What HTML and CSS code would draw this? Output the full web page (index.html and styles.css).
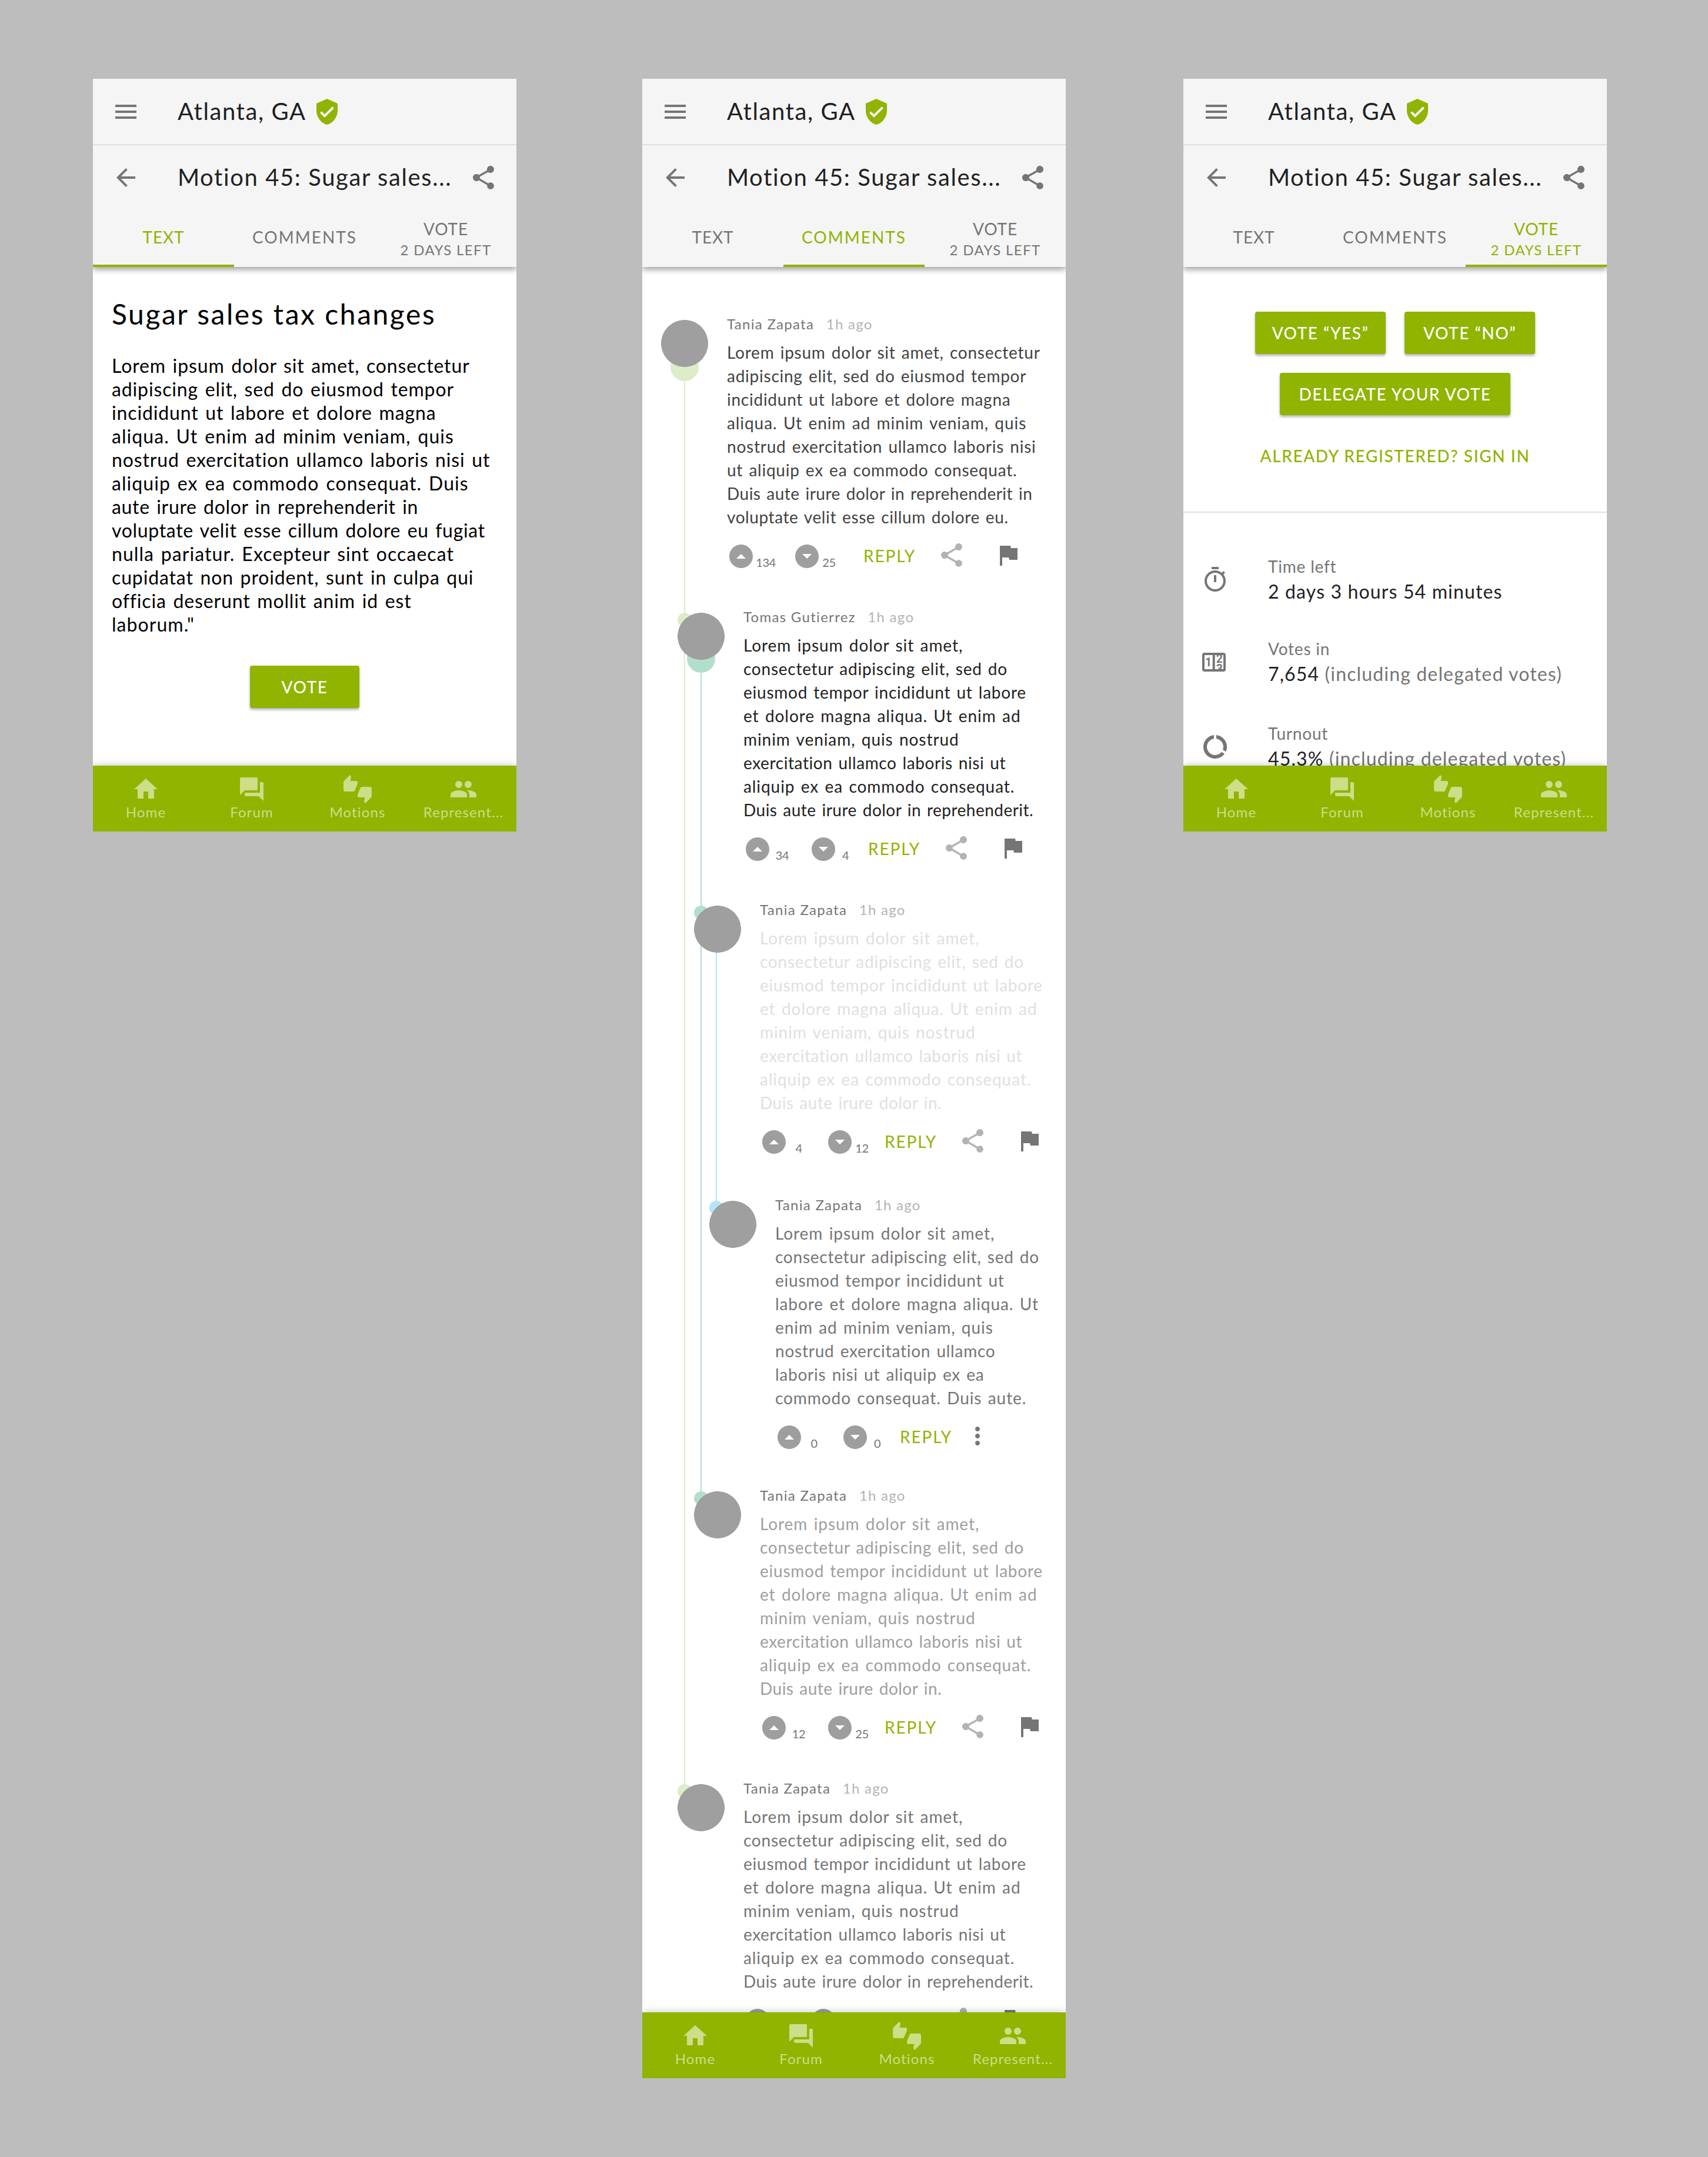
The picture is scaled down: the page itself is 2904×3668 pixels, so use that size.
FILE: index.html
```html
<!DOCTYPE html>
<html lang="en">
<head>
<meta charset="utf-8">
<title>Motion 45: Sugar sales tax changes</title>
<link rel="stylesheet" href="styles.css">
</head>
<body>
<svg class="sprite" aria-hidden="true">
  <symbol id="i-menu" viewBox="0 0 24 24"><path d="M3 18h18v-2H3v2zm0-5h18v-2H3v2zm0-7v2h18V6H3z"/></symbol>
  <symbol id="i-back" viewBox="0 0 24 24"><path d="M20 11H7.83l5.59-5.59L12 4l-8 8 8 8 1.41-1.41L7.83 13H20v-2z"/></symbol>
  <symbol id="i-share" viewBox="0 0 24 24"><path d="M18 16.08c-.76 0-1.44.3-1.96.77L8.91 12.7c.05-.23.09-.46.09-.7s-.04-.47-.09-.7l7.05-4.11c.54.5 1.25.81 2.04.81 1.66 0 3-1.34 3-3s-1.34-3-3-3-3 1.34-3 3c0 .24.04.47.09.7L8.04 9.81C7.5 9.31 6.79 9 6 9c-1.66 0-3 1.34-3 3s1.34 3 3 3c.79 0 1.5-.31 2.04-.81l7.12 4.16c-.05.21-.08.43-.08.65 0 1.61 1.31 2.92 2.92 2.92 1.61 0 2.92-1.31 2.92-2.92s-1.31-2.92-2.92-2.92z"/></symbol>
  <symbol id="i-shield" viewBox="0 0 24 24"><path d="M12 1L3 5v6c0 5.55 3.84 10.74 9 12 5.16-1.26 9-6.45 9-12V5l-9-4zm-2 16l-4-4 1.41-1.41L10 14.17l6.59-6.59L18 9l-8 8z"/></symbol>
  <symbol id="i-home" viewBox="0 0 24 24"><path d="M10 20v-6h4v6h5v-8h3L12 3 2 12h3v8z"/></symbol>
  <symbol id="i-forum" viewBox="0 0 24 24"><path d="M21 6h-2v9H6v2c0 .55.45 1 1 1h11l4 4V7c0-.55-.45-1-1-1zm-4 6V3c0-.55-.45-1-1-1H3c-.55 0-1 .45-1 1v14l4-4h10c.55 0 1-.45 1-1z"/></symbol>
  <symbol id="i-thumbs" viewBox="0 0 24 24"><path d="M12 6c0-.55-.45-1-1-1H5.82l.66-3.18.02-.23c0-.31-.13-.59-.33-.8L5.38 0 .44 4.94C.17 5.21 0 5.59 0 6v6.5c0 .83.67 1.5 1.5 1.5h6.75c.62 0 1.15-.38 1.38-.91l2.26-5.29c.07-.17.11-.36.11-.55V6zm10.5 4h-6.75c-.62 0-1.15.38-1.38.91l-2.26 5.29c-.07.17-.11.36-.11.55V18c0 .55.45 1 1 1h5.18l-.66 3.18-.02.24c0 .31.13.59.33.8l.79.78 4.94-4.94c.27-.27.44-.65.44-1.06v-6.5c0-.83-.67-1.5-1.5-1.5z"/></symbol>
  <symbol id="i-people" viewBox="0 0 24 24"><path d="M16 11c1.66 0 2.99-1.34 2.99-3S17.66 5 16 5c-1.66 0-3 1.34-3 3s1.34 3 3 3zm-8 0c1.66 0 2.99-1.34 2.99-3S9.66 5 8 5C6.34 5 5 6.34 5 8s1.34 3 3 3zm0 2c-2.33 0-7 1.17-7 3.5V19h14v-2.5c0-2.33-4.67-3.5-7-3.5zm8 0c-.29 0-.62.02-.97.05 1.16.84 1.97 1.97 1.97 3.45V19h6v-2.5c0-2.33-4.67-3.5-7-3.5z"/></symbol>
  <symbol id="i-up" viewBox="0 0 24 24"><path d="M12 22c5.52 0 10-4.48 10-10S17.52 2 12 2 2 6.48 2 12s4.48 10 10 10zm0-12l4 4H8l4-4z"/></symbol>
  <symbol id="i-down" viewBox="0 0 24 24"><path d="M12 2C6.48 2 2 6.48 2 12s4.48 10 10 10 10-4.48 10-10S17.52 2 12 2zm0 12l-4-4h8l-4 4z"/></symbol>
  <symbol id="i-flag" viewBox="0 0 24 24"><path d="M14.4 6L14 4H5v17h2v-7h5.6l.4 2h7V6z"/></symbol>
  <symbol id="i-more" viewBox="0 0 24 24"><path d="M12 8c1.1 0 2-.9 2-2s-.9-2-2-2-2 .9-2 2 .9 2 2 2zm0 2c-1.1 0-2 .9-2 2s.9 2 2 2 2-.9 2-2-.9-2-2-2zm0 6c-1.1 0-2 .9-2 2s.9 2 2 2 2-.9 2-2-.9-2-2-2z"/></symbol>
  <symbol id="i-timer" viewBox="0 0 24 24"><path d="M15 1H9v2h6V1zm-4 13h2V8h-2v6zm8.03-6.61l1.42-1.42c-.43-.51-.9-.99-1.41-1.41l-1.42 1.42C16.07 4.74 14.12 4 12 4c-4.97 0-9 4.03-9 9s4.02 9 9 9 9-4.03 9-9c0-2.12-.74-4.07-1.97-5.61zM12 20c-3.87 0-7-3.13-7-7s3.13-7 7-7 7 3.13 7 7-3.13 7-7 7z"/></symbol>
  <symbol id="i-usage" viewBox="0 0 24 24"><path d="M13 2.05v3.03c3.39.49 6 3.39 6 6.92 0 .9-.18 1.75-.48 2.54l2.6 1.53c.56-1.24.88-2.62.88-4.07 0-5.18-3.95-9.45-9-9.95zM12 19c-3.87 0-7-3.13-7-7 0-3.53 2.61-6.43 6-6.92V2.05c-5.06.5-9 4.76-9 9.95 0 5.52 4.47 10 9.99 10 3.31 0 6.24-1.61 8.06-4.09l-2.6-1.53C16.17 17.98 14.21 19 12 19z"/></symbol>
</svg>

<main class="board">

  <section class="phone">
    <header class="header">
      <div class="bar bar-place">
        <svg class="icon"><use href="#i-menu"/></svg>
        <h1 class="bar-title">Atlanta, GA</h1>
        <svg class="icon shield"><use href="#i-shield"/></svg>
      </div>
      <div class="bar bar-motion">
        <svg class="icon"><use href="#i-back"/></svg>
        <h2 class="bar-title">Motion 45: Sugar sales...</h2>
        <svg class="icon bar-share"><use href="#i-share"/></svg>
      </div>
      <nav class="tabs">
        <div class="tab tab-text active">TEXT</div>
        <div class="tab tab-comments">COMMENTS</div>
        <div class="tab tab-vote">VOTE<small>2 DAYS LEFT</small></div>
      </nav>
    </header>
    <article class="content motion">
      <h3>Sugar sales tax changes</h3>
      <p>Lorem ipsum dolor sit amet, consectetur<br>adipiscing elit, sed do eiusmod tempor<br>incididunt ut labore et dolore magna<br><span class="loose">aliqua. Ut enim ad minim veniam, quis</span><br>nostrud exercitation ullamco laboris nisi ut<br><span class="loose">aliquip ex ea commodo consequat. Duis</span><br><span class="snug">aute irure dolor in reprehenderit in</span><br><span class="snug">voluptate velit esse cillum dolore eu fugiat</span><br><span class="loose">nulla pariatur. Excepteur sint occaecat</span><br>cupidatat non proident, sunt in culpa qui<br>officia deserunt mollit anim id est<br><span class="loose">laborum."</span></p>
      <button class="button button-small">VOTE</button>
    </article>
    <nav class="bottom-nav">
      <div class="nav-item"><svg class="icon"><use href="#i-home"/></svg><span>Home</span></div>
      <div class="nav-item"><svg class="icon"><use href="#i-forum"/></svg><span>Forum</span></div>
      <div class="nav-item"><svg class="icon"><use href="#i-thumbs"/></svg><span>Motions</span></div>
      <div class="nav-item"><svg class="icon"><use href="#i-people"/></svg><span>Represent...</span></div>
    </nav>
  </section>

  <section class="phone phone-tall">
    <header class="header">
      <div class="bar bar-place">
        <svg class="icon"><use href="#i-menu"/></svg>
        <h1 class="bar-title">Atlanta, GA</h1>
        <svg class="icon shield"><use href="#i-shield"/></svg>
      </div>
      <div class="bar bar-motion">
        <svg class="icon"><use href="#i-back"/></svg>
        <h2 class="bar-title">Motion 45: Sugar sales...</h2>
        <svg class="icon bar-share"><use href="#i-share"/></svg>
      </div>
      <nav class="tabs">
        <div class="tab tab-text">TEXT</div>
        <div class="tab tab-comments active">COMMENTS</div>
        <div class="tab tab-vote">VOTE<small>2 DAYS LEFT</small></div>
      </nav>
    </header>
    <div class="content comments">
      <div class="thread thread-lime">
        <div class="rail"></div>
        <article class="comment">
          <div class="avatar has-replies"></div>
          <div class="comment-main">
            <div class="byline">Tania Zapata <time>1h ago</time></div>
            <p class="dark">Lorem ipsum dolor sit amet, consectetur<br>adipiscing elit, sed do eiusmod tempor<br>incididunt ut labore et dolore magna<br><span class="loose">aliqua. Ut enim ad minim veniam, quis</span><br>nostrud exercitation ullamco laboris nisi<br>ut aliquip ex ea commodo consequat.<br><span class="tight">Duis aute irure dolor in reprehenderit in</span><br><span class="snug">voluptate velit esse cillum dolore eu.</span></p>
            <div class="actions actions-wide">
              <svg class="icon vote-icon"><use href="#i-up"/></svg><span class="count">134</span>
              <svg class="icon vote-icon"><use href="#i-down"/></svg><span class="count">25</span>
              <a class="reply">REPLY</a>
              <svg class="icon share-icon"><use href="#i-share"/></svg>
              <svg class="icon flag-icon"><use href="#i-flag"/></svg>
            </div>
          </div>
        </article>

        <div class="replies">
          <div class="thread thread-teal">
            <div class="rail"></div>
            <article class="comment">
              <div class="avatar is-reply has-replies"></div>
              <div class="comment-main">
                <div class="byline">Tomas Gutierrez <time>1h ago</time></div>
                <p class="black"><span class="loose">Lorem ipsum dolor sit amet,</span><br>consectetur adipiscing elit, sed do<br>eiusmod tempor incididunt ut labore<br><span class="loose">et dolore magna aliqua. Ut enim ad</span><br><span class="loose">minim veniam, quis nostrud</span><br><span class="snug">exercitation ullamco laboris nisi ut</span><br><span class="loose">aliquip ex ea commodo consequat.</span><br><span class="tight">Duis aute irure dolor in reprehenderit.</span></p>
                <div class="actions">
                  <svg class="icon vote-icon"><use href="#i-up"/></svg><span class="count">34</span>
                  <svg class="icon vote-icon"><use href="#i-down"/></svg><span class="count">4</span>
                  <a class="reply">REPLY</a>
                  <svg class="icon share-icon"><use href="#i-share"/></svg>
                  <svg class="icon flag-icon"><use href="#i-flag"/></svg>
                </div>
              </div>
            </article>

            <div class="replies">
              <div class="thread thread-blue">
                <div class="rail"></div>
                <article class="comment">
                  <div class="avatar is-reply"></div>
                  <div class="comment-main">
                    <div class="byline">Tania Zapata <time>1h ago</time></div>
                    <p class="faint"><span class="loose">Lorem ipsum dolor sit amet,</span><br>consectetur adipiscing elit, sed do<br>eiusmod tempor incididunt ut labore<br><span class="loose">et dolore magna aliqua. Ut enim ad</span><br><span class="loose">minim veniam, quis nostrud</span><br><span class="snug">exercitation ullamco laboris nisi ut</span><br><span class="loose">aliquip ex ea commodo consequat.</span><br><span class="tight">Duis aute irure dolor in.</span></p>
                    <div class="actions">
                      <svg class="icon vote-icon"><use href="#i-up"/></svg><span class="count">4</span>
                      <svg class="icon vote-icon"><use href="#i-down"/></svg><span class="count">12</span>
                      <a class="reply">REPLY</a>
                      <svg class="icon share-icon"><use href="#i-share"/></svg>
                      <svg class="icon flag-icon"><use href="#i-flag"/></svg>
                    </div>
                  </div>
                </article>
                <div class="replies">
                  <article class="comment">
                    <div class="avatar is-reply"></div>
                    <div class="comment-main">
                      <div class="byline">Tania Zapata <time>1h ago</time></div>
                      <p class="grey"><span class="loose">Lorem ipsum dolor sit amet,</span><br>consectetur adipiscing elit, sed do<br>eiusmod tempor incididunt ut<br><span class="loose">labore et dolore magna aliqua. Ut</span><br><span class="loose">enim ad minim veniam, quis</span><br>nostrud exercitation ullamco<br>laboris nisi ut aliquip ex ea<br><span class="loose">commodo consequat. Duis aute.</span></p>
                      <div class="actions">
                        <svg class="icon vote-icon"><use href="#i-up"/></svg><span class="count">0</span>
                        <svg class="icon vote-icon"><use href="#i-down"/></svg><span class="count">0</span>
                        <a class="reply">REPLY</a>
                        <svg class="icon more-icon"><use href="#i-more"/></svg>
                      </div>
                    </div>
                  </article>
                </div>
              </div>
              <article class="comment">
                <div class="avatar is-reply"></div>
                <div class="comment-main">
                  <div class="byline">Tania Zapata <time>1h ago</time></div>
                  <p class="pale"><span class="loose">Lorem ipsum dolor sit amet,</span><br>consectetur adipiscing elit, sed do<br>eiusmod tempor incididunt ut labore<br><span class="loose">et dolore magna aliqua. Ut enim ad</span><br><span class="loose">minim veniam, quis nostrud</span><br><span class="snug">exercitation ullamco laboris nisi ut</span><br><span class="loose">aliquip ex ea commodo consequat.</span><br><span class="tight">Duis aute irure dolor in.</span></p>
                  <div class="actions">
                    <svg class="icon vote-icon"><use href="#i-up"/></svg><span class="count">12</span>
                    <svg class="icon vote-icon"><use href="#i-down"/></svg><span class="count">25</span>
                    <a class="reply">REPLY</a>
                    <svg class="icon share-icon"><use href="#i-share"/></svg>
                    <svg class="icon flag-icon"><use href="#i-flag"/></svg>
                  </div>
                </div>
              </article>
            </div>
          </div>
          <article class="comment">
            <div class="avatar is-reply"></div>
            <div class="comment-main">
              <div class="byline">Tania Zapata <time>1h ago</time></div>
              <p class="grey"><span class="loose">Lorem ipsum dolor sit amet,</span><br>consectetur adipiscing elit, sed do<br>eiusmod tempor incididunt ut labore<br><span class="loose">et dolore magna aliqua. Ut enim ad</span><br><span class="loose">minim veniam, quis nostrud</span><br><span class="snug">exercitation ullamco laboris nisi ut</span><br><span class="loose">aliquip ex ea commodo consequat.</span><br><span class="tight">Duis aute irure dolor in reprehenderit.</span></p>
              <div class="actions">
                <svg class="icon vote-icon"><use href="#i-up"/></svg><span class="count"></span>
                <svg class="icon vote-icon"><use href="#i-down"/></svg><span class="count"></span>
                <span class="reply"></span>
                <svg class="icon share-icon"><use href="#i-share"/></svg>
                <svg class="icon flag-icon"><use href="#i-flag"/></svg>
              </div>
            </div>
          </article>
        </div>
      </div>
    </div>
    <nav class="bottom-nav">
      <div class="nav-item"><svg class="icon"><use href="#i-home"/></svg><span>Home</span></div>
      <div class="nav-item"><svg class="icon"><use href="#i-forum"/></svg><span>Forum</span></div>
      <div class="nav-item"><svg class="icon"><use href="#i-thumbs"/></svg><span>Motions</span></div>
      <div class="nav-item"><svg class="icon"><use href="#i-people"/></svg><span>Represent...</span></div>
    </nav>
  </section>

  <section class="phone">
    <header class="header">
      <div class="bar bar-place">
        <svg class="icon"><use href="#i-menu"/></svg>
        <h1 class="bar-title">Atlanta, GA</h1>
        <svg class="icon shield"><use href="#i-shield"/></svg>
      </div>
      <div class="bar bar-motion">
        <svg class="icon"><use href="#i-back"/></svg>
        <h2 class="bar-title">Motion 45: Sugar sales...</h2>
        <svg class="icon bar-share"><use href="#i-share"/></svg>
      </div>
      <nav class="tabs">
        <div class="tab tab-text">TEXT</div>
        <div class="tab tab-comments">COMMENTS</div>
        <div class="tab tab-vote active">VOTE<small>2 DAYS LEFT</small></div>
      </nav>
    </header>
    <div class="content voting">
      <div class="ballot">
        <div class="choices">
          <button class="button">VOTE “YES”</button>
          <button class="button">VOTE “NO”</button>
        </div>
        <button class="button button-wide">DELEGATE YOUR VOTE</button>
        <a class="sign-in">ALREADY REGISTERED? SIGN IN</a>
      </div>
      <dl class="stats">
        <div class="stat">
          <svg class="icon"><use href="#i-timer"/></svg>
          <div><dt>Time left</dt><dd>2 days 3 hours 54 minutes</dd></div>
        </div>
        <div class="stat">
          <svg class="icon" viewBox="0 0 48 48">
            <clipPath id="reel"><rect x="24" y="12" width="14" height="24"/></clipPath>
            <rect class="counter-frame" x="4" y="10" width="36" height="28" rx="2"/>
            <path class="counter-frame" d="M21.7 10v28"/>
            <text class="counter-digit" x="12.5" y="31.2">1</text>
            <g clip-path="url(#reel)">
              <text class="counter-digit" x="31.4" y="24.7">2</text>
              <text class="counter-digit" x="31.4" y="42.4">3</text>
            </g>
          </svg>
          <div><dt>Votes in</dt><dd>7,654 <span>(including delegated votes)</span></dd></div>
        </div>
        <div class="stat">
          <svg class="icon"><use href="#i-usage"/></svg>
          <div><dt>Turnout</dt><dd>45.3% <span>(including delegated votes)</span></dd></div>
        </div>
      </dl>
    </div>
    <nav class="bottom-nav">
      <div class="nav-item"><svg class="icon"><use href="#i-home"/></svg><span>Home</span></div>
      <div class="nav-item"><svg class="icon"><use href="#i-forum"/></svg><span>Forum</span></div>
      <div class="nav-item"><svg class="icon"><use href="#i-thumbs"/></svg><span>Motions</span></div>
      <div class="nav-item"><svg class="icon"><use href="#i-people"/></svg><span>Represent...</span></div>
    </nav>
  </section>

</main>
</body>
</html>
```
FILE: styles.css
```css
* { box-sizing: border-box; }

:root {
  --green: #90b400;
  --grey: #757575;
}

body {
  margin: 0;
  background: #bdbdbd;
  font-family: Lato, "Open Sans", sans-serif;
  color: #212121;
}

h1, h2, h3, p, dl, dd { margin: 0; font-weight: 400; }

.sprite { position: absolute; width: 0; height: 0; }

.icon {
  display: block;
  flex: none;
  width: 48px;
  height: 48px;
  fill: var(--grey);
}

.board {
  display: flex;
  align-items: flex-start;
  height: 3668px;
  padding: 134px 0 0 158px;
}

.phone {
  display: flex;
  flex-direction: column;
  flex: none;
  width: 720px;
  height: 1280px;
  overflow: hidden;
  background: #fff;
  white-space: nowrap;
}

.phone-tall { height: 3400px; margin: 0 200px 0 214px; }

/* header */

.header {
  position: relative;
  z-index: 1;
  flex: none;
  background: #f5f5f5;
  box-shadow: 0 4px 10px rgba(0, 0, 0, .4);
}

.bar {
  display: flex;
  align-items: center;
  padding: 0 32px;
}

.bar-place { height: 113px; padding-top: 1px; border-bottom: 2px solid #e0e0e0; }
.bar-motion { height: 111px; padding-bottom: 1px; }

.bar-title {
  margin: -3px 0 0 64px;
  font-size: 40px;
  line-height: 48px;
  letter-spacing: 1.6px;
}

.shield { margin-left: 11px; fill: var(--green); }
.bar-share { margin-left: auto; }

.tabs { display: flex; height: 96px; }

.tab {
  display: flex;
  flex: 1;
  flex-direction: column;
  align-items: center;
  justify-content: center;
  padding-bottom: 2px;
  border-bottom: 4px solid transparent;
  font-size: 28px;
  line-height: 36px;
  letter-spacing: .9px;
  color: var(--grey);
}

.tab-comments { letter-spacing: 2px; }
.tab-vote { padding-top: 8px; }
.tab small { font-size: 24px; letter-spacing: 1.35px; }
.tab.active { color: var(--green); border-color: var(--green); }

.content { flex: 1; min-height: 0; overflow: hidden; }

/* motion text */

.motion { padding: 50px 32px 0; color: #000; }

.motion h3 {
  font-size: 48px;
  line-height: 60px;
  letter-spacing: 2.55px;
}

.motion p {
  margin-top: 38px;
  font-size: 32px;
  line-height: 40px;
  letter-spacing: .027em;
  word-spacing: .082em;
}

/* line tracking */
.loose { letter-spacing: .033em; }
.snug { letter-spacing: .021em; }
.tight { letter-spacing: .017em; }

.button {
  display: block;
  width: 222px;
  height: 72px;
  padding: 0;
  border: 0;
  border-radius: 4px;
  background: var(--green);
  box-shadow: 0 3px 4px rgba(0, 0, 0, .3);
  font: 500 28px/36px Lato, sans-serif;
  letter-spacing: 1.5px;
  color: #fff;
}

.button-small { width: 186px; margin: 50px auto 0; }
.button-wide { width: 392px; }

/* bottom navigation */

.bottom-nav {
  position: relative;
  display: flex;
  flex: none;
  height: 112px;
  padding-top: 16px;
  background: var(--green);
  box-shadow: 0 0 12px rgba(0, 0, 0, .25);
  color: #cddd88;
}

.nav-item {
  display: flex;
  flex: 1;
  flex-direction: column;
  align-items: center;
  font-size: 24px;
  line-height: 28px;
  letter-spacing: 1.1px;
}

.nav-item .icon { margin-bottom: 1px; fill: #cddd88; }

/* comments */

.comments { position: relative; z-index: 0; padding: 90px 0 0 32px; }

.thread { position: relative; }
.thread-lime { --rail: #dcedc8; }
.thread-teal { --rail: #b2dfcb; }
.thread-blue { --rail: #b3e5fc; }

/* runs from the first avatar down to the top of the thread's last reply */
.rail {
  position: absolute;
  top: 80px;
  bottom: 428px;
  left: 39px;
  width: 2px;
  background: var(--rail);
}

.thread-blue > .rail { left: 37px; }

.replies { padding-left: 28px; }
.thread-blue > .replies { padding-left: 26px; }

.comment {
  display: flex;
  gap: 32px;
  height: 428px;
  margin-bottom: 70px;
}

.thread-blue > .comment { margin-bottom: 74px; }
.thread-blue > .replies > .comment { margin-bottom: 66px; }

.avatar {
  position: relative;
  flex: none;
  width: 80px;
  height: 80px;
  background: radial-gradient(circle, #9f9f9f 39.6px, transparent 40.2px);
}

/* branch dots sit behind the disc */
.avatar::before,
.avatar::after { position: absolute; z-index: -1; border-radius: 50%; }

.is-reply::before {
  content: "";
  top: 0;
  left: 0;
  width: 24px;
  height: 24px;
  background: var(--rail);
}

.has-replies::after {
  content: "";
  top: 56px;
  left: 16px;
  width: 48px;
  height: 48px;
  background: var(--rail);
}

.thread-teal > .comment .has-replies::after { top: 54px; }

/* a reply's dot carries the colour of the thread it joins */
.thread-teal > .comment .is-reply::before { background: #dcedc8; }
.thread-blue > .comment .is-reply::before { background: #b2dfcb; }

.comment-main { margin-top: -9px; }

.byline {
  height: 44px;
  font-size: 24px;
  line-height: 32px;
  letter-spacing: 1.3px;
  color: var(--grey);
}

.byline time { margin-left: 13px; color: #b3b3b3; }

.comment p {
  font-size: 28px;
  line-height: 40px;
  letter-spacing: .027em;
  word-spacing: .082em;
}

.dark { color: #424242; }
.black { color: #212121; }
.grey { color: #757575; }
.pale { color: #9e9e9e; }
.faint { color: #e0e0e0; }

.actions {
  display: grid;
  grid-template-columns: 48px 36px 28px 48px 27px 25px 126px 48px 48px 48px;
  grid-template-rows: 52px;
  margin-top: 21px;
}

.actions-wide { grid-template-columns: 48px 36px 28px 48px 27px 45px 126px 48px 48px 48px; }

.actions > :nth-child(3) { grid-column: 4; }
.actions > :nth-child(5) { grid-column: 7; }
.actions > .flag-icon { grid-column: 10; }

.vote-icon { margin-top: 2px; fill: #9e9e9e; }
.share-icon { fill: #b3b3b3; }
.more-icon { margin-left: -18px; }

.count {
  display: flex;
  justify-content: center;
  padding-top: 24px;
  font-size: 20px;
  line-height: 24px;
  letter-spacing: -.4px;
  color: var(--grey);
}

.reply {
  font-size: 28px;
  line-height: 50px;
  letter-spacing: 1.9px;
  color: var(--green);
}

/* voting */

.voting { display: flex; flex-direction: column; }

.ballot {
  display: flex;
  flex: none;
  flex-direction: column;
  align-items: center;
  height: 418px;
  padding-top: 76px;
  border-bottom: 2px solid #e0e0e0;
}

.choices { display: flex; gap: 32px; margin-bottom: 32px; }

.sign-in {
  margin-top: 49px;
  font-size: 28px;
  font-weight: 500;
  line-height: 40px;
  letter-spacing: 1.58px;
  color: var(--green);
}

.stats { padding: 74px 0 0 30px; }

.stat { display: flex; gap: 66px; margin-bottom: 60px; }
.stat + .stat { margin-bottom: 64px; }
.stat .icon { margin-top: 16px; }

.stat dt {
  font-size: 28px;
  line-height: 34px;
  letter-spacing: .8px;
  color: var(--grey);
}

.stat dd {
  margin-top: 6px;
  font-size: 32px;
  line-height: 40px;
  letter-spacing: 1.15px;
}

.stat dd span { color: var(--grey); }

.counter-frame { fill: none; stroke: var(--grey); stroke-width: 4; }
.counter-digit { font: 700 19.5px Roboto, sans-serif; text-anchor: middle; }
```
